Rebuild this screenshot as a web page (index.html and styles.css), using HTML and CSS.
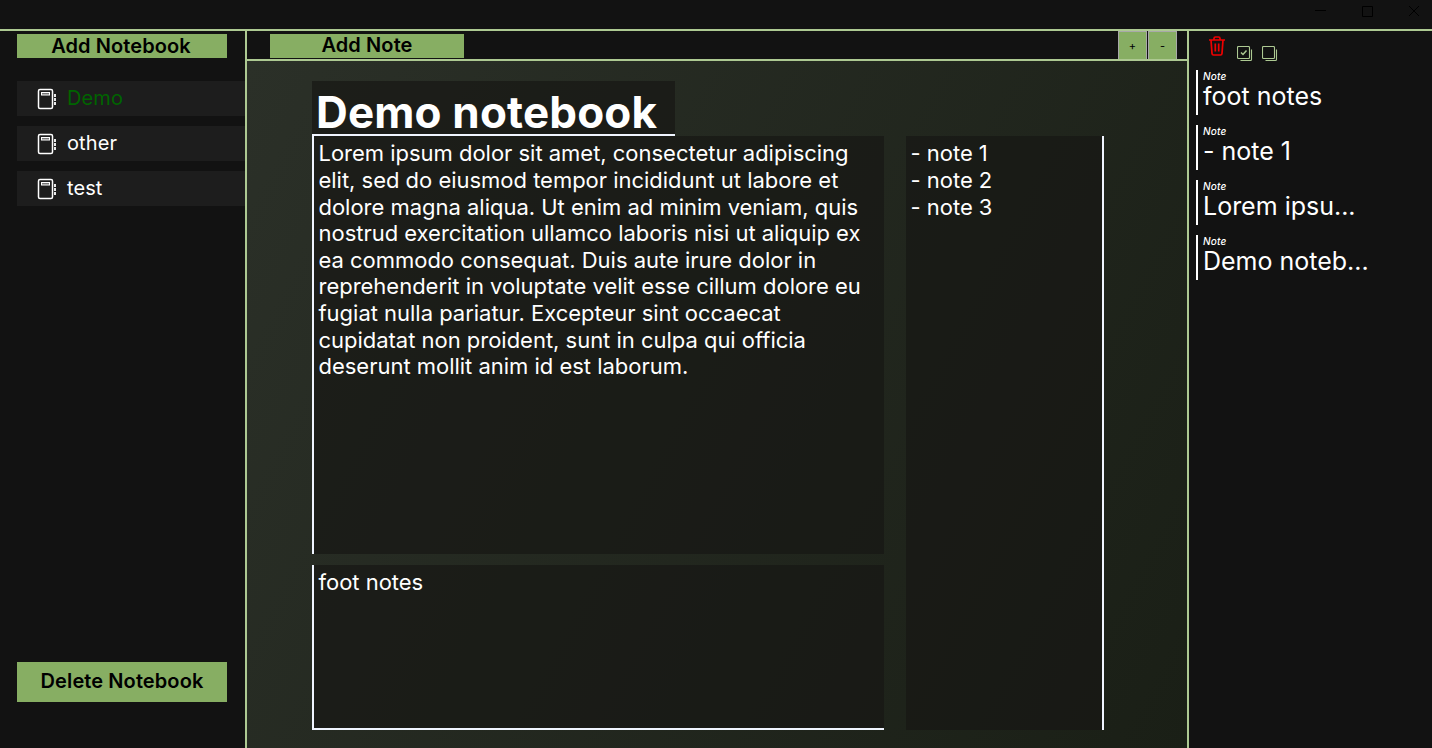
FILE: index.html
```html
<!DOCTYPE html>
<html lang="en">
<head>
<meta charset="utf-8">
<title>Notebook</title>
<link rel="stylesheet" href="styles.css">
</head>
<body>
<svg class="defs" aria-hidden="true">
  <symbol id="book" viewBox="0 0 20 22">
    <rect x="1.5" y="1.5" width="14" height="19" rx="1.5" fill="none" stroke="#fff" stroke-width="1.5"/>
    <rect x="4.5" y="4.5" width="8" height="2.5" fill="#777" stroke="#fff"/>
    <path d="M18 6v3M18 10v3M18 14v3" stroke="#fff" stroke-width="1.8"/>
  </symbol>
</svg>
<header class="titlebar">
  <svg class="winctl" viewBox="0 0 108 14" fill="none" stroke="#000"><path d="M2 6.500h11M49.500 2.500h10v10h-10zM96 2l10 10M106 2l-10 10"/></svg>
</header>
<main class="app">
  <aside class="left">
    <button class="btn add">Add Notebook</button>
    <nav class="books">
      <a class="book active"><svg><use href="#book"/></svg><span>Demo</span></a>
      <a class="book"><svg><use href="#book"/></svg><span>other</span></a>
      <a class="book"><svg><use href="#book"/></svg><span>test</span></a>
    </nav>
    <button class="btn delete">Delete Notebook</button>
  </aside>
  <section class="center">
    <div class="toolbar">
      <button class="btn add-note">Add Note</button>
      <div class="zoom"><button>+</button><button>-</button></div>
    </div>
    <div class="page">
      <h1 class="note heading">Demo notebook</h1>
      <div class="note body">Lorem ipsum dolor sit amet, consectetur adipiscing<br>elit, sed do eiusmod tempor incididunt ut labore et<br>dolore magna aliqua. Ut enim ad minim veniam, quis<br>nostrud exercitation ullamco laboris nisi ut aliquip ex<br>ea commodo consequat. Duis aute irure dolor in<br>reprehenderit in voluptate velit esse cillum dolore eu<br>fugiat nulla pariatur. Excepteur sint occaecat<br>cupidatat non proident, sunt in culpa qui officia<br>deserunt mollit anim id est laborum.</div>
      <div class="note side">- note 1<br>- note 2<br>- note 3</div>
      <div class="note foot">foot notes</div>
    </div>
  </section>
  <aside class="right">
    <div class="tools">
      <svg class="trash" viewBox="0 0 16 20" fill="none" stroke="#f00000" stroke-width="1.700"><path d="M0 4h16M5 4V2.500Q5 1 6.500 1h3Q11 1 11 2.500V4M2 4l1 13.500Q3.100 19 4.500 19h7Q12.900 19 13 17.500L14 4M6.300 7.500v8M9.700 7.500v8"/></svg>
      <svg class="box" viewBox="0 0 16 16" fill="none" stroke="#adc992"><rect x=".5" y=".5" width="12" height="12" rx="1" stroke-width="1.100"/><path d="M4 6.500l2 2 3.500-4" stroke-width="1.500"/><path d="M14.500 3.500v10q0 1-1 1H3.500" stroke-width="1.100"/></svg>
      <svg class="box" viewBox="0 0 16 16" fill="none" stroke="#adc992"><rect x=".5" y=".5" width="12" height="12" rx="1" stroke-width="1.100"/><path d="M14.500 3.500v10q0 1-1 1H3.500" stroke-width="1.100"/></svg>
    </div>
    <ul class="list">
      <li><em>Note</em><span>foot notes</span></li>
      <li><em>Note</em><span>- note 1</span></li>
      <li><em>Note</em><span>Lorem ipsu...</span></li>
      <li><em>Note</em><span>Demo noteb...</span></li>
    </ul>
  </aside>
</main>
</body>
</html>
```
FILE: styles.css
```css
* { box-sizing: border-box; }
body {
  margin: 0;
  height: 748px;
  display: flex;
  flex-direction: column;
  overflow: hidden;
  background: #121212;
  color: #fff;
  font-family: Inter, sans-serif;
}
.defs { display: none; }
.titlebar {
  flex: none;
  height: 31px;
  display: flex;
  justify-content: flex-end;
  padding: 4px 11px 0 0;
  border-bottom: 2px solid #adc992;
}
.winctl { width: 108px; height: 14px; }
.app { flex: 1; display: grid; grid-template-columns: 247px 940px 1fr; }
.btn {
  border: 0;
  padding: 0;
  background: #87ae63;
  color: #000;
  font: 600 20px/24px Inter, sans-serif;
  letter-spacing: .1px;
}
.left {
  display: flex;
  flex-direction: column;
  padding: 3px 0 46px 17px;
  border-right: 2px solid #adc992;
}
.left .btn { width: 210px; }
.add { height: 24px; padding: 0 2px 1px 0; }
.books { flex: 1; display: flex; flex-direction: column; gap: 10px; padding-top: 23px; }
.book {
  height: 35px;
  display: flex;
  align-items: center;
  gap: 10px;
  padding-left: 20px;
  background: #1d1d1d;
  font-size: 20px;
  line-height: 24px;
  letter-spacing: .1px;
}
.book span { padding-bottom: 2px; }
.book svg { width: 20px; height: 22px; }
.book.active { color: #006400; }
.delete { height: 40px; padding-bottom: 2px; }
.center { display: flex; flex-direction: column; min-width: 0; }
.toolbar {
  height: 30px;
  display: flex;
  justify-content: space-between;
  padding: 0 10px 0 23px;
  border-bottom: 2px solid #adc992;
}
.add-note { width: 194px; height: 24px; margin-top: 3px; line-height: 22px; padding-bottom: 2px; }
.zoom { display: flex; gap: 1px; }
.zoom button {
  width: 29px;
  height: 28px;
  padding: 1px 0 0;
  border: 1px solid #a9a9a9;
  border-bottom: 0;
  background: #87ae63;
  color: #000;
  font: 11px Inter, sans-serif;
}
.page {
  flex: 1;
  display: grid;
  grid-template: 55px 417.500px 176px / 572px 198px;
  column-gap: 22px;
  padding: 20px 0 0 65px;
  background: linear-gradient(118deg, #2b3028, #1a1f16);
}
.note {
  margin: 0;
  padding: 4.200px 4.500px;
  background: rgba(23, 23, 20, .7);
  font-size: 22px;
  line-height: 26.660px;
  letter-spacing: -.02px;
  white-space: nowrap;
}
.heading {
  grid-area: 1 / 1;
  width: 363px;
  height: 54.500px;
  padding: 5px 4px 0;
  border-bottom: 2px solid #f0f5ff;
  font-size: 44px;
  line-height: 53px;
  letter-spacing: .16px;
}
.body { grid-area: 2 / 1; border-left: 2px solid #f0f5ff; }
.side { grid-area: 2 / 2 / 4 / 3; border-right: 2px solid #f0f5ff; }
.foot { grid-area: 3 / 1; margin-top: 11px; border: solid #f0f5ff; border-width: 0 0 2px 2px; }
.right { border-left: 2px solid #adc992; padding: 5px 0 0 7px; }
.tools { display: flex; padding-left: 13px; height: 34px; }
.trash { width: 16px; height: 20px; }
.box { width: 16px; height: 16px; margin: 10px 0 0 12px; }
.box + .box { margin-left: 9px; }
.list { margin: 0; padding: 0; list-style: none; display: flex; flex-direction: column; gap: 10px; }
.list li { height: 45px; padding-left: 5px; border-left: 2px solid #fff; }
.list em, .list span { display: block; }
.list em { font-size: 10px; font-weight: 500; line-height: 12px; letter-spacing: .2px; }
.list span { font-size: 25px; line-height: 29px; }
```
